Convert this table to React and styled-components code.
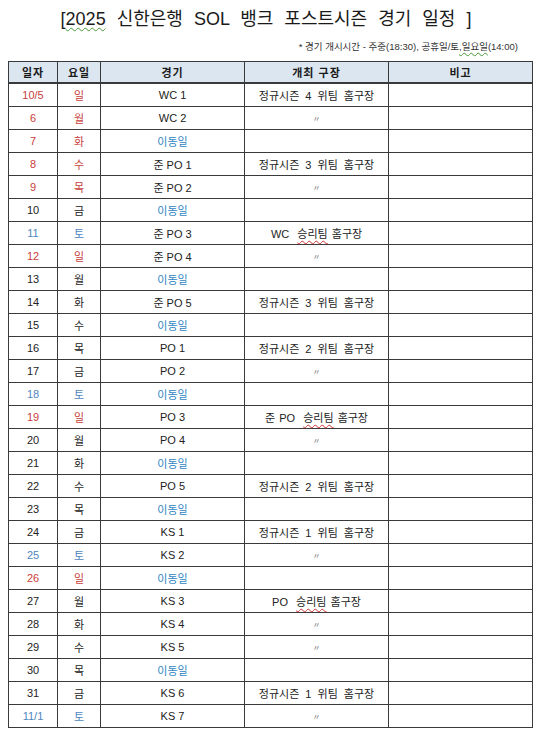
import styled, { createGlobalStyle } from "styled-components";

const colors = {
    line: "#3a3a3a",
    header: "#dce6f1",
    text: "#222222",
    red: "#c8403a",
    blue: "#4f86c0",
    move: "#2f86c2",
    ditto: "#777777",
};

const GlobalStyle = createGlobalStyle`
    body {
        margin: 0;
        background: #ffffff;
        font-family: "Liberation Sans", "Noto Sans CJK KR", sans-serif;
        color: ${colors.text};
    }
`;

const Page = styled.div`
    width: 540px;
    height: 738px;
    box-sizing: border-box;
    padding: 8px 8px 0 8px;
    display: flex;
    flex-direction: column;
`;

const Title = styled.h1`
    margin: 0;
    font-size: 18px;
    font-weight: 400;
    line-height: 22px;
    text-align: center;
    word-spacing: 6px;
    padding-right: 8px;
    color: #1a1a1a;
`;

const Note = styled.p`
    margin: 11px 0 0;
    font-size: 9.5px;
    line-height: 12px;
    text-align: right;
    padding-right: 14px;
    color: #333;
`;

const Squiggle = styled.span`
    text-decoration: underline wavy
        ${(props) => (props.$tone === "red" ? "#d03030" : "#4a9a3a")};
    text-decoration-thickness: 1px;
    text-underline-offset: 2px;
`;

const Table = styled.table`
    margin-top: 8px;
    width: 524px;
    border-collapse: collapse;
    table-layout: fixed;
    border: 1.5px solid ${colors.line};
`;

const HeadCell = styled.th`
    height: 20px;
    padding: 0;
    background: ${colors.header};
    border: 1px solid ${colors.line};
    border-bottom: 2px solid ${colors.line};
    font-size: 11px;
    font-weight: 700;
    text-align: center;
    color: #1a1a1a;
    letter-spacing: 1px;
`;

const Cell = styled.td`
    height: 22px;
    padding: 0;
    border: 1px solid ${colors.line};
    font-size: 11px;
    text-align: center;
    color: ${(props) => colors[props.$tone] || colors.text};
`;

const Ditto = styled.span`
    font-size: 8px;
    color: ${colors.ditto};
`;

const HomeText = styled.span`
    word-spacing: ${(props) => (props.$wide ? "3px" : "1px")};
`;

const rows = [
    ["10/5", "일", "red", "WC 1", "정규시즌 4 위팀 홈구장"],
    ["6", "월", "red", "WC 2", "〃"],
    ["7", "화", "red", null, ""],
    ["8", "수", "red", "준 PO 1", "정규시즌 3 위팀 홈구장"],
    ["9", "목", "red", "준 PO 2", "〃"],
    ["10", "금", "", null, ""],
    ["11", "토", "blue", "준 PO 3", "WC|승리팀"],
    ["12", "일", "red", "준 PO 4", "〃"],
    ["13", "월", "", null, ""],
    ["14", "화", "", "준 PO 5", "정규시즌 3 위팀 홈구장"],
    ["15", "수", "", null, ""],
    ["16", "목", "", "PO 1", "정규시즌 2 위팀 홈구장"],
    ["17", "금", "", "PO 2", "〃"],
    ["18", "토", "blue", null, ""],
    ["19", "일", "red", "PO 3", "준 PO|승리팀"],
    ["20", "월", "", "PO 4", "〃"],
    ["21", "화", "", null, ""],
    ["22", "수", "", "PO 5", "정규시즌 2 위팀 홈구장"],
    ["23", "목", "", null, ""],
    ["24", "금", "", "KS 1", "정규시즌 1 위팀 홈구장"],
    ["25", "토", "blue", "KS 2", "〃"],
    ["26", "일", "red", null, ""],
    ["27", "월", "", "KS 3", "PO|승리팀"],
    ["28", "화", "", "KS 4", "〃"],
    ["29", "수", "", "KS 5", "〃"],
    ["30", "목", "", null, ""],
    ["31", "금", "", "KS 6", "정규시즌 1 위팀 홈구장"],
    ["11/1", "토", "blue", "KS 7", "〃"],
];

function Venue({ value }) {
    if (value === "〃") {
        return <Ditto>〃</Ditto>;
    }
    if (value.includes("|")) {
        const [winner] = value.split("|");
        return (
            <HomeText>
                {winner}&nbsp; <Squiggle $tone="red">승리팀</Squiggle> 홈구장
            </HomeText>
        );
    }
    return <HomeText $wide>{value}</HomeText>;
}

export default function App() {
    return (
        <>
            <GlobalStyle />
            <Page>
                <Title>
                    [<Squiggle>2025</Squiggle> 신한은행 SOL 뱅크 포스트시즌 경기 일정 ]
                </Title>
                <Note>
                    * 경기 개시시간 - 주중(18:30), 공휴일/토
                    <Squiggle>,일요일</Squiggle>(14:00)
                </Note>
                <Table>
                    <colgroup>
                        <col style={{ width: 49 }} />
                        <col style={{ width: 43 }} />
                        <col style={{ width: 144 }} />
                        <col style={{ width: 144 }} />
                        <col style={{ width: 144 }} />
                    </colgroup>
                    <thead>
                        <tr>
                            <HeadCell>일자</HeadCell>
                            <HeadCell>요일</HeadCell>
                            <HeadCell>경기</HeadCell>
                            <HeadCell>개최 구장</HeadCell>
                            <HeadCell>비고</HeadCell>
                        </tr>
                    </thead>
                    <tbody>
                        {rows.map(([date, day, tone, game, venue]) => (
                            <tr key={date}>
                                <Cell $tone={tone}>{date}</Cell>
                                <Cell $tone={tone}>{day}</Cell>
                                {game ? (
                                    <Cell>{game}</Cell>
                                ) : (
                                    <Cell $tone="move">이동일</Cell>
                                )}
                                <Cell>
                                    <Venue value={venue} />
                                </Cell>
                                <Cell />
                            </tr>
                        ))}
                    </tbody>
                </Table>
            </Page>
        </>
    );
}
